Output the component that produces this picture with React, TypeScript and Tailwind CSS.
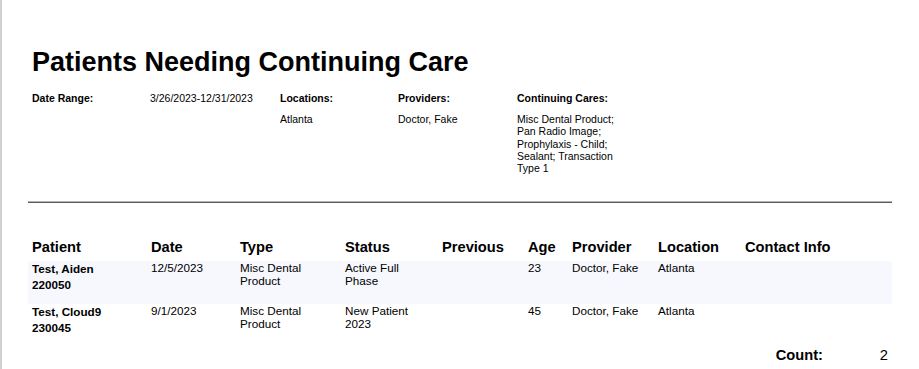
const rows = [
  {
    name: "Test, Aiden",
    id: "220050",
    date: "12/5/2023",
    type: "Misc Dental Product",
    status: "Active Full Phase",
    previous: "",
    age: "23",
    provider: "Doctor, Fake",
    location: "Atlanta",
    contact: "",
  },
  {
    name: "Test, Cloud9",
    id: "230045",
    date: "9/1/2023",
    type: "Misc Dental Product",
    status: "New Patient 2023",
    previous: "",
    age: "45",
    provider: "Doctor, Fake",
    location: "Atlanta",
    contact: "",
  },
];

const headers = ["Patient", "Date", "Type", "Status", "Previous", "Age", "Provider", "Location", "Contact Info"];

const cols = "grid grid-cols-[119px_89px_105px_97px_86px_44px_86px_87px_1fr]";

export default function App() {
  return (
    <div
      className="min-h-screen bg-white border-l-2 border-[#d0d0d0] pl-[26px] text-black"
      style={{ fontFamily: '"Liberation Sans", Arial, sans-serif' }}
    >
      <div className="w-[864px]">
        {/* Title */}
        <h1 className="pt-[47px] pl-1 text-[27px] leading-[31px] font-bold">
          Patients Needing Continuing Care
        </h1>

        {/* Report parameters */}
        <div className="mt-[14px] pl-1 flex text-[10.5px] leading-[12px]">
          <div className="w-[118px] font-bold">Date Range:</div>
          <div className="w-[130px]">3/26/2023-12/31/2023</div>
          <div className="w-[118px]">
            <div className="font-bold">Locations:</div>
            <div className="mt-[9px]">Atlanta</div>
          </div>
          <div className="w-[119px]">
            <div className="font-bold">Providers:</div>
            <div className="mt-[9px]">Doctor, Fake</div>
          </div>
          <div className="w-[100px]">
            <div className="font-bold">Continuing Cares:</div>
            <div className="mt-[9px] leading-[12.3px]">
              Misc Dental Product; Pan Radio Image; Prophylaxis - Child; Sealant; Transaction Type 1
            </div>
          </div>
        </div>

        {/* Divider */}
        <div className="mt-[27px] h-[2px] border-t border-b border-t-[#b4b4b4] border-b-[#5c5c5c]" />

        {/* Table header */}
        <div className={`${cols} mt-[36px] h-[22px] text-[14.67px] leading-[17px] font-bold`}>
          {headers.map((h) => (
            <div key={h} className="pl-1">
              {h}
            </div>
          ))}
        </div>

        {/* Rows */}
        {rows.map((r, i) => (
          <div
            key={r.id}
            className={`${cols} h-[43px] text-[11.7px] leading-[13px] ${i % 2 === 0 ? "bg-[#f7f8fd]" : ""}`}
          >
            <div className="pl-1 pr-2 font-bold leading-[15.5px]">
              <div>{r.name}</div>
              <div>{r.id}</div>
            </div>
            <div className="pl-1 pr-2">{r.date}</div>
            <div className="pl-1 pr-2">{r.type}</div>
            <div className="pl-1 pr-2">{r.status}</div>
            <div className="pl-1 pr-2">{r.previous}</div>
            <div className="pl-1 pr-2">{r.age}</div>
            <div className="pl-1 pr-2">{r.provider}</div>
            <div className="pl-1 pr-2">{r.location}</div>
            <div className="pl-1 pr-2">{r.contact}</div>
          </div>
        ))}

        {/* Count */}
        <div className="flex justify-end text-[14.67px] leading-[17px]">
          <div className="font-bold">Count:</div>
          <div className="w-[69px] text-right pr-1">2</div>
        </div>
      </div>
    </div>
  );
}
